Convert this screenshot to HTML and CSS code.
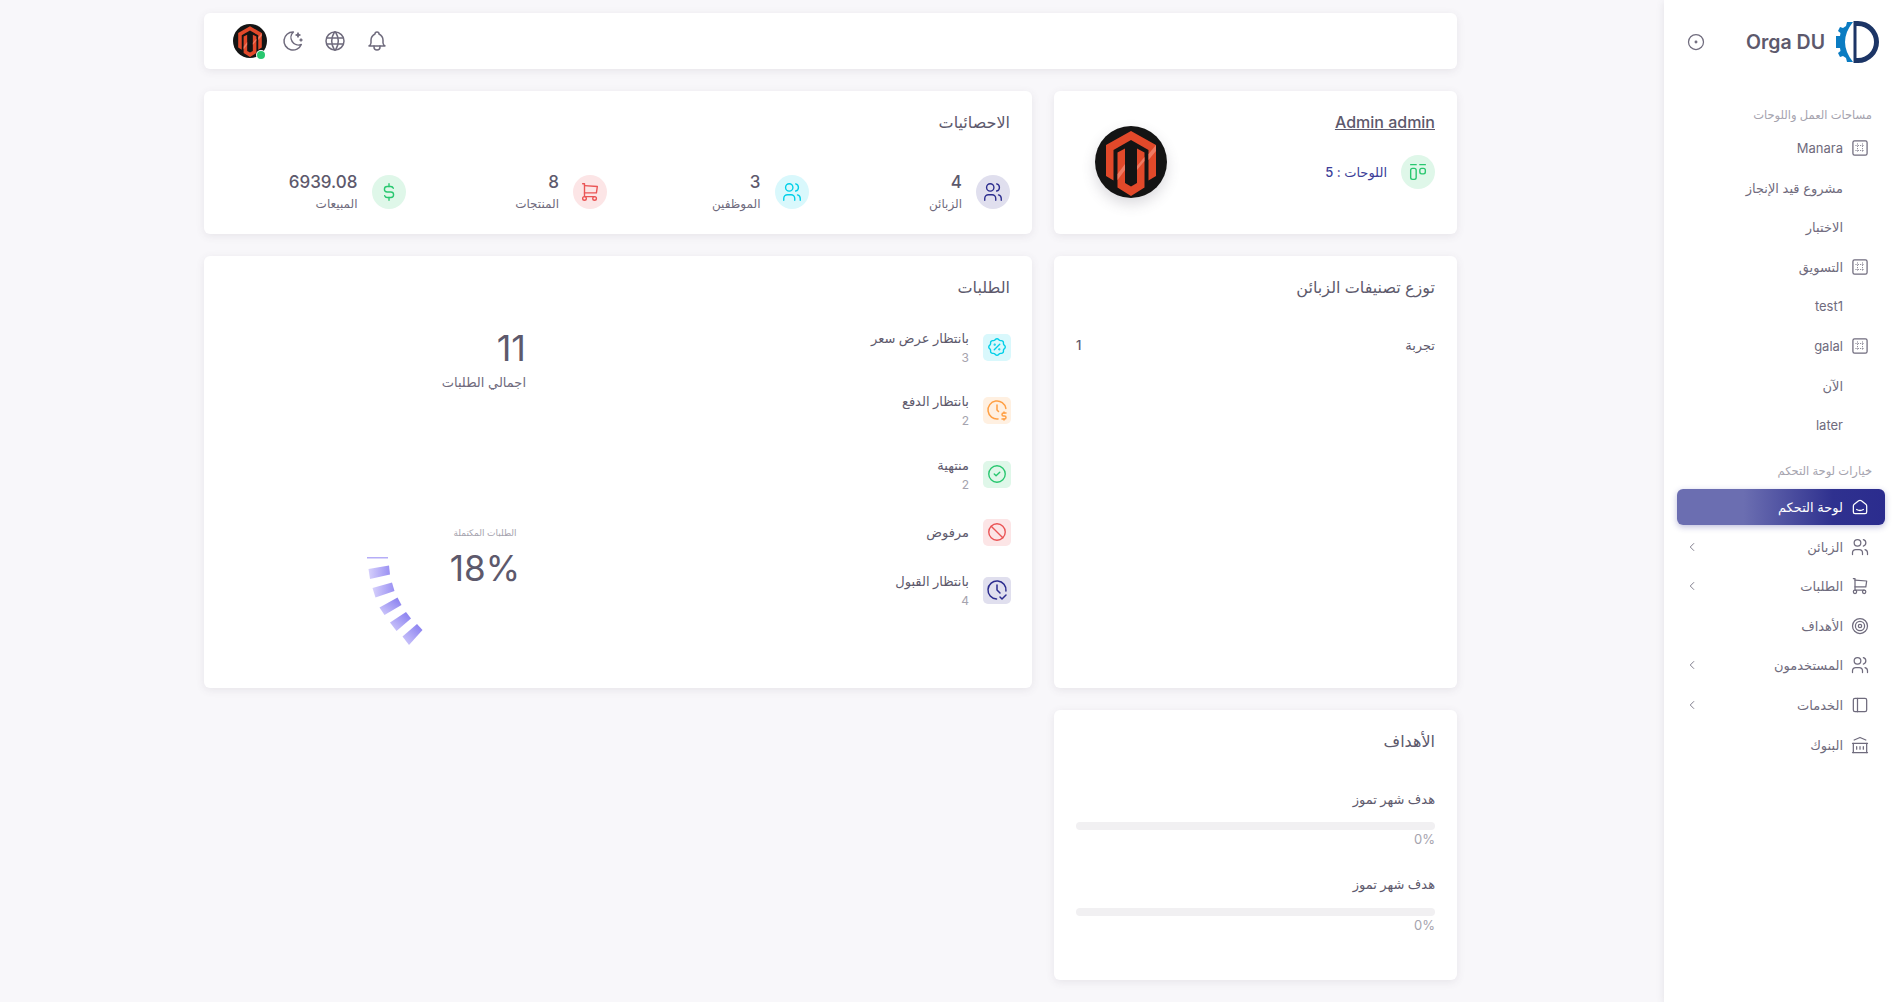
FILE: index.html
```html
<!DOCTYPE html>
<html lang="ar" dir="rtl">
<head>
<meta charset="utf-8">
<title>Orga DU</title>
<link rel="stylesheet" href="styles.css">
</head>
<body>
<svg class="sprite" xmlns="http://www.w3.org/2000/svg">
  <symbol id="i-users" viewBox="0 0 24 24"><circle cx="9" cy="7" r="4"/><path d="M3 21v-2a4 4 0 0 1 4 -4h4a4 4 0 0 1 4 4v2"/><path d="M16 3.13a4 4 0 0 1 0 7.75"/><path d="M21 21v-2a4 4 0 0 0 -3 -3.85"/></symbol>
  <symbol id="i-home" viewBox="0 0 24 24"><path d="M19 8.71l-5.333 -4.148a2.666 2.666 0 0 0 -3.274 0l-5.334 4.148a2.665 2.665 0 0 0 -1.029 2.105v7.2a2 2 0 0 0 2 2h12a2 2 0 0 0 2 -2v-7.2c0 -.823 -.38 -1.6 -1.03 -2.105"/><path d="M16 15c-2.21 1.333 -5.792 1.333 -8 0"/></symbol>
  <symbol id="i-cart" viewBox="0 0 24 24"><circle cx="6" cy="19" r="2"/><circle cx="17" cy="19" r="2"/><path d="M17 17h-11v-14h-2"/><path d="M6 5l14 1l-1 7h-13"/></symbol>
  <symbol id="i-target" viewBox="0 0 24 24"><circle cx="12" cy="12" r="2"/><circle cx="12" cy="12" r="5.5"/><circle cx="12" cy="12" r="9"/></symbol>
  <symbol id="i-sidebar" viewBox="0 0 24 24"><rect x="4" y="4" width="16" height="16" rx="2"/><path d="M9 4v16"/></symbol>
  <symbol id="i-bank" viewBox="0 0 24 24"><path d="M3 21h18"/><path d="M3 10h18"/><path d="M5 6l7 -3l7 3"/><path d="M4 10v11"/><path d="M20 10v11"/><path d="M8 14v3"/><path d="M12 14v3"/><path d="M16 14v3"/></symbol>
  <symbol id="i-chev" viewBox="0 0 24 24"><path d="M15 6l-6 6l6 6"/></symbol>
  <symbol id="i-board" viewBox="0 0 24 24"><rect x="3.500" y="3.500" width="17" height="17" rx="2"/><path class="dots" d="M9 7v10M15 7v10M7 9h10M7 15h10"/></symbol>
  <symbol id="i-dot" viewBox="0 0 24 24"><circle cx="12" cy="12" r="9"/><circle cx="12" cy="12" r="1"/></symbol>
  <symbol id="i-bell" viewBox="0 0 24 24"><path d="M10 5a2 2 0 1 1 4 0a7 7 0 0 1 4 6v3a4 4 0 0 0 2 3h-16a4 4 0 0 0 2 -3v-3a7 7 0 0 1 4 -6"/><path d="M9 17v1a3 3 0 0 0 6 0v-1"/></symbol>
  <symbol id="i-world" viewBox="0 0 24 24"><circle cx="12" cy="12" r="9"/><path d="M3.600 9h16.800"/><path d="M3.600 15h16.800"/><path d="M11.500 3a17 17 0 0 0 0 18"/><path d="M12.500 3a17 17 0 0 1 0 18"/></symbol>
  <symbol id="i-moon" viewBox="0 0 24 24"><path d="M12 3c.132 0 .263 0 .393 0a7.500 7.500 0 0 0 7.920 12.446a9 9 0 1 1 -8.313 -12.454z"/><path d="M17 4a2 2 0 0 0 2 2a2 2 0 0 0 -2 2a2 2 0 0 0 -2 -2a2 2 0 0 0 2 -2"/><path d="M19 11h2m-1 -1v2"/></symbol>
  <symbol id="i-dollar" viewBox="0 0 24 24"><path d="M16.700 8a3 3 0 0 0 -2.700 -2h-4a3 3 0 0 0 0 6h4a3 3 0 0 1 0 6h-4a3 3 0 0 1 -2.700 -2"/><path d="M12 3v3m0 12v3"/></symbol>
  <symbol id="i-kanban" viewBox="0 0 24 24"><path d="M4 4h6"/><path d="M14 4h6"/><rect x="4" y="8" width="6" height="12" rx="2"/><rect x="14" y="8" width="6" height="6" rx="2"/></symbol>
  <symbol id="i-rosette" viewBox="0 0 24 24"><path d="M9 15l6 -6"/><circle cx="9.500" cy="9.500" r=".5"/><circle cx="14.500" cy="14.500" r=".5"/><path d="M5 7.200a2.200 2.200 0 0 1 2.200 -2.200h1a2.200 2.200 0 0 0 1.550 -.64l.7 -.7a2.200 2.200 0 0 1 3.120 0l.7 .7c.412 .41 .97 .64 1.550 .64h1a2.200 2.200 0 0 1 2.200 2.200v1c0 .58 .23 1.138 .64 1.550l.7 .7a2.200 2.200 0 0 1 0 3.120l-.7 .7a2.200 2.200 0 0 0 -.64 1.550v1a2.200 2.200 0 0 1 -2.200 2.200h-1a2.200 2.200 0 0 0 -1.550 .64l-.7 .7a2.200 2.200 0 0 1 -3.120 0l-.7 -.7a2.200 2.200 0 0 0 -1.550 -.64h-1a2.200 2.200 0 0 1 -2.200 -2.200v-1a2.200 2.200 0 0 0 -.64 -1.550l-.7 -.7a2.200 2.200 0 0 1 0 -3.120l.7 -.7a2.200 2.200 0 0 0 .64 -1.550v-1"/></symbol>
  <symbol id="i-clockd" viewBox="0 0 24 24"><path d="M20.866 10.450a9 9 0 1 0 -7.815 10.488"/><path d="M12 7v5l1.500 1.500"/><path d="M21 15h-2.500a1.500 1.500 0 0 0 0 3h1a1.500 1.500 0 0 1 0 3h-2.500"/><path d="M19 21v1m0 -8v1"/></symbol>
  <symbol id="i-check" viewBox="0 0 24 24"><circle cx="12" cy="12" r="9"/><path d="M9 12l2 2l4 -4"/></symbol>
  <symbol id="i-ban" viewBox="0 0 24 24"><circle cx="12" cy="12" r="9"/><path d="M5.700 5.700l12.600 12.600"/></symbol>
  <symbol id="i-clockc" viewBox="0 0 24 24"><path d="M20.942 13.021a9 9 0 1 0 -9.407 7.967"/><path d="M12 7v5l3 3"/><path d="M15 19l2 2l4 -4"/></symbol>
  <symbol id="i-magento" viewBox="0 0 72 72"><circle class="mg-bg" cx="36" cy="36" r="36"/><path class="mg-fg" d="M36 5L61 19V50L53.500 54.500V24L36 14L18.500 24V54.500L11 50V19Z"/><path class="mg-fg" d="M22.500 26.500L30 22.500V57L36 60.500L42 57V22.500L49.500 26.500V61.500L36 70L22.500 61.500Z"/><path class="mg-gloss" d="M22.500 48L30 38V44L22.500 54ZM53.500 28L61 19V25L53.500 34ZM42 40L49.500 31V35L42 44Z"/></symbol>
</svg>

<aside class="sidebar">
  <div class="brand">
    <svg class="logo" viewBox="0 0 44 44" xmlns="http://www.w3.org/2000/svg">
      <path class="logo-gear" d="M18 2H12L11 6L8 8L5 7L3 11L5.500 13L5 16H1V28H5L5.500 31L3 33L5 37L8 36L11 38L12 42H18Q2 22 18 2Z"/>
      <path class="logo-d" fill-rule="evenodd" d="M18.500 1H23A21 21 0 0 1 23 43H18.500ZM21.500 6V38H23A16 16 0 0 0 23 6Z"/>
    </svg>
    <span class="brand-name">Orga DU</span>
    <svg class="ico brand-toggle"><use href="#i-dot"/></svg>
  </div>

  <nav class="nav">
    <div class="nav-label nav-label-first">مساحات العمل واللوحات</div>
    <a class="nav-item"><svg class="ico"><use href="#i-board"/></svg><span>Manara</span></a>
    <a class="nav-item"><span class="ico"></span><span>مشروع قيد الإنجاز</span></a>
    <a class="nav-item"><span class="ico"></span><span>الاختبار</span></a>
    <a class="nav-item"><svg class="ico"><use href="#i-board"/></svg><span>التسويق</span></a>
    <a class="nav-item"><span class="ico"></span><span>test1</span></a>
    <a class="nav-item"><svg class="ico"><use href="#i-board"/></svg><span>galal</span></a>
    <a class="nav-item"><span class="ico"></span><span>الآن</span></a>
    <a class="nav-item"><span class="ico"></span><span>later</span></a>

    <div class="nav-label nav-label-second">خيارات لوحة التحكم</div>
    <a class="nav-item active"><svg class="ico"><use href="#i-home"/></svg><span>لوحة التحكم</span></a>
    <a class="nav-item"><svg class="ico"><use href="#i-users"/></svg><span>الزبائن</span><svg class="chev"><use href="#i-chev"/></svg></a>
    <a class="nav-item"><svg class="ico"><use href="#i-cart"/></svg><span>الطلبات</span><svg class="chev"><use href="#i-chev"/></svg></a>
    <a class="nav-item"><svg class="ico"><use href="#i-target"/></svg><span>الأهداف</span></a>
    <a class="nav-item"><svg class="ico"><use href="#i-users"/></svg><span>المستخدمون</span><svg class="chev"><use href="#i-chev"/></svg></a>
    <a class="nav-item"><svg class="ico"><use href="#i-sidebar"/></svg><span>الخدمات</span><svg class="chev"><use href="#i-chev"/></svg></a>
    <a class="nav-item"><svg class="ico"><use href="#i-bank"/></svg><span>البنوك</span></a>
  </nav>
</aside>

<main class="main">
  <header class="topbar">
    <div class="top-actions">
      <svg class="ico top-ico"><use href="#i-bell"/></svg>
      <svg class="ico top-ico"><use href="#i-world"/></svg>
      <svg class="ico top-ico"><use href="#i-moon"/></svg>
      <div class="top-avatar">
        <svg class="avatar-sm"><use href="#i-magento"/></svg>
        <span class="online"></span>
      </div>
    </div>
  </header>

  <div class="dash">
    <section class="card profile">
      <div class="profile-info">
        <a class="profile-name">Admin admin</a>
        <div class="profile-boards">
          <span class="round green"><svg class="ico-18"><use href="#i-kanban"/></svg></span>
          <span class="boards-text">اللوحات : 5</span>
        </div>
      </div>
      <div class="profile-avatar"><svg class="avatar-lg"><use href="#i-magento"/></svg></div>
    </section>

    <section class="card stats">
      <h2 class="card-title">الاحصائيات</h2>
      <div class="stats-grid">
        <div class="stat"><span class="round indigo"><svg class="ico-18"><use href="#i-users"/></svg></span><div><div class="stat-num">4</div><div class="stat-label">الزبائن</div></div></div>
        <div class="stat"><span class="round cyan"><svg class="ico-18"><use href="#i-users"/></svg></span><div><div class="stat-num">3</div><div class="stat-label">الموظفين</div></div></div>
        <div class="stat"><span class="round red"><svg class="ico-18"><use href="#i-cart"/></svg></span><div><div class="stat-num">8</div><div class="stat-label">المنتجات</div></div></div>
        <div class="stat"><span class="round green"><svg class="ico-18"><use href="#i-dollar"/></svg></span><div><div class="stat-num">6939.08</div><div class="stat-label">المبيعات</div></div></div>
      </div>
    </section>

    <section class="card dist">
      <h2 class="card-title">توزع تصنيفات الزبائن</h2>
      <div class="dist-row"><span>تجربة</span><span>1</span></div>
    </section>

    <section class="card orders">
      <h2 class="card-title">الطلبات</h2>
      <div class="orders-body">
        <div class="order-list">
          <div class="order o1"><span class="tile cyan"><svg class="ico-18"><use href="#i-rosette"/></svg></span><div><div class="order-name">بانتظار عرض سعر</div><div class="order-num">3</div></div></div>
          <div class="order o2"><span class="tile orange"><svg class="ico-20"><use href="#i-clockd"/></svg></span><div><div class="order-name">بانتظار الدفع</div><div class="order-num">2</div></div></div>
          <div class="order o3"><span class="tile green"><svg class="ico-18"><use href="#i-check"/></svg></span><div><div class="order-name">منتهية</div><div class="order-num">2</div></div></div>
          <div class="order o4"><span class="tile red"><svg class="ico-18"><use href="#i-ban"/></svg></span><div><div class="order-name">مرفوض</div></div></div>
          <div class="order o5"><span class="tile indigo"><svg class="ico-20"><use href="#i-clockc"/></svg></span><div><div class="order-name">بانتظار القبول</div><div class="order-num">4</div></div></div>
        </div>
        <div class="order-summary">
          <div class="total-num">11</div>
          <div class="total-label">اجمالي الطلبات</div>
          <div class="completed">
            <div class="completed-text">
              <div class="completed-label">الطلبات المكتملة</div>
              <div class="completed-num">18%</div>
            </div>
            <svg class="gauge" viewBox="0 0 56 92" xmlns="http://www.w3.org/2000/svg">
              <defs>
                <linearGradient id="g1" x1="0" x2="1" y1="0" y2="0"><stop offset="0" stop-color="#d6d0fb"/><stop offset="1" stop-color="#9a90f3"/></linearGradient>
                <linearGradient id="g2" x1="0" x2="1" y1="1" y2="0"><stop offset="0" stop-color="#d3cdfb"/><stop offset="1" stop-color="#8379ef"/></linearGradient>
              </defs>
              <rect x="1" y="0" width="21" height="1.500" fill="#b5adf7"/>
              <path fill="url(#g1)" d="M2.500 12L23 8.500L24 17.500L4 22Z"/>
              <path fill="url(#g1)" d="M6.500 31L26 25.500L28.500 34L9.500 40.500Z"/>
              <path fill="url(#g2)" d="M13.500 50.500L31.500 40.500L35.500 48L18.500 58Z"/>
              <path fill="url(#g2)" d="M24 65.500L40 55L45 61.500L30.500 74Z"/>
              <path fill="url(#g2)" d="M36.500 79.500L51 67L56.500 73L43 88Z"/>
            </svg>
          </div>
        </div>
      </div>
    </section>

    <section class="card goals">
      <h2 class="card-title">الأهداف</h2>
      <div class="goal">
        <div class="goal-name">هدف شهر تموز</div>
        <div class="goal-bar"></div>
        <div class="goal-pct">0%</div>
      </div>
      <div class="goal">
        <div class="goal-name">هدف شهر تموز</div>
        <div class="goal-bar"></div>
        <div class="goal-pct">0%</div>
      </div>
    </section>
  </div>
</main>
</body>
</html>
```

FILE: styles.css
```css
* { box-sizing: border-box; }
html, body { height: 100%; margin: 0; }
body {
  display: flex;
  background: #f8f7fa;
  color: #5d596c;
  font-family: "Inter", "DejaVu Sans", sans-serif;
  font-size: 13px;
  overflow: hidden;
}
.sprite { display: none; }
svg { fill: none; stroke: currentColor; stroke-width: 1.5; stroke-linecap: round; stroke-linejoin: round; overflow: visible; }
.dots { stroke-dasharray: .4 2.4; stroke-width: 1; }
.mg-bg { fill: #141414; stroke: none; }
.mg-fg { fill: #e2492a; stroke: none; }
.mg-gloss { fill: #ef7a62; stroke: none; }

/* sidebar */
.sidebar {
  flex: 0 0 230px;
  height: 100%;
  background: #fff;
  box-shadow: 0 2px 8px rgba(75, 70, 92, .12);
}
.brand {
  display: flex;
  align-items: center;
  height: 84px;
  padding: 0 15px 0 22px;
}
.logo { width: 44px; height: 44px; stroke: none; flex: none; }
.logo-gear { fill: #0b7cc2; stroke: none; }
.logo-d { fill: #1c3566; stroke: none; }
.brand-name { margin-inline-start: 10px; font-size: 19.500px; font-weight: 600; color: #5d596c; }
.brand-toggle { margin-inline-start: auto; color: #6f6b7d; }
.ico { width: 20px; height: 20px; flex: none; display: block; color: #6f6b7d; }
.nav { display: flex; flex-direction: column; gap: 3.600px; padding: 21px 9px 0 13px; }
.nav-label {
  height: 24px;
  padding-inline-start: 13px;
  line-height: 14px;
  padding-top: 3px;
  font-size: 11.500px;
  color: #a5a3ae;
}
.nav-label-first { margin-bottom: -2.500px; }
.nav-label-second { margin-top: 14.500px; }
.nav-item {
  display: flex;
  align-items: center;
  gap: 7px;
  height: 36px;
  padding: 0 15px 0 8px;
  border-radius: 6px;
  font-size: 13px;
  color: #6f6b7d;
}
.nav-item.active {
  background: linear-gradient(270deg, #2b2c8e 0%, #2f318f 25%, #6b6eb1 68%, #6b6eb1 100%);
  color: #fff;
  box-shadow: 0 2px 6px rgba(43, 44, 142, .3);
}
.nav-item.active .ico { color: #fff; }
.chev { width: 14px; height: 14px; margin-inline-start: auto; color: #6f6b7d; }

/* main */
.main { flex: 1; min-width: 0; padding: 13px 207px 0 204px; }
.card, .topbar {
  background: #fff;
  border-radius: 6px;
  box-shadow: 0 2px 8px rgba(75, 70, 92, .1);
}
.topbar {
  height: 56px;
  padding: 0 22px 0 29px;
  display: flex;
  align-items: center;
  justify-content: flex-end;
}
.top-actions { display: flex; align-items: center; gap: 18px; }
.top-ico { width: 24px; height: 24px; }
.top-avatar { position: relative; width: 34px; height: 34px; margin-inline-start: -4px; }
.avatar-sm { width: 34px; height: 34px; display: block; }
.online {
  position: absolute;
  left: 24px;
  bottom: -1px;
  width: 8px;
  height: 8px;
  border-radius: 50%;
  background: #28c76f;
  box-shadow: 0 0 0 1px #fff;
}
.dash {
  display: grid;
  grid-template-columns: 403px 1fr;
  grid-template-rows: 143px 432px 270px;
  gap: 22px;
  margin-top: 22px;
}
.card { padding: 22px; }
.card-title { margin: 0; font-size: 16px; font-weight: 500; line-height: 18px; color: #5d596c; }

/* profile */
.profile { display: flex; justify-content: space-between; }
.profile-name { display: block; font-size: 16px; line-height: 18px; font-weight: 500; text-decoration: underline; color: #5d596c; }
.profile-boards { display: flex; align-items: center; gap: 14px; margin-top: 24px; }
.boards-text { font-size: 13px; font-weight: 500; color: #3b3d98; }
.profile-avatar { margin: 13px 0 0 19px; }
.avatar-lg { width: 72px; height: 72px; display: block; border-radius: 50%; box-shadow: 0 6px 14px rgba(75, 70, 92, .2); }
.round {
  width: 34px;
  height: 34px;
  border-radius: 50%;
  display: flex;
  align-items: center;
  justify-content: center;
  flex: none;
}
.ico-18 { width: 22px; height: 22px; display: block; }
.ico-20 { width: 24px; height: 24px; display: block; }
.green { background: #dff7e9; color: #28c76f; }
.indigo { background: #e0dfee; color: #2b2c8e; }
.cyan { background: #d9f8fc; color: #00cfe8; }
.red { background: #fce5e6; color: #ea5455; }
.orange { background: #fff0e1; color: #ff9f43; }

/* stats */
.stats-grid { display: grid; grid-template-columns: repeat(4, 1fr); gap: 22px; margin-top: 41px; }
.stat { display: flex; align-items: center; gap: 14px; }
.stat-num { font-size: 17px; font-weight: 500; line-height: 20px; color: #5d596c; }
.stat-label { font-size: 12px; line-height: 16px; margin-top: 4px; color: #6f6b7d; }

/* distribution */
.dist-row { display: flex; justify-content: space-between; margin-top: 41px; font-size: 13px; font-weight: 500; line-height: 16px; }

/* orders */
.orders { grid-column: 2; grid-row: 2; }
.orders-body { display: grid; grid-template-columns: 1fr 1fr; gap: 22px; }
.order { display: flex; align-items: center; gap: 14px; }
.order-list { padding-top: 33px; display: flex; flex-direction: column; }
.o1, .o2, .o3, .o5 { height: 36px; }
.o2 { margin-top: 27px; }
.o3 { margin-top: 28px; }
.o4 { height: 28px; margin-top: 26px; }
.o5 { margin-top: 26px; }
.tile {
  width: 28px;
  height: 27px;
  margin-inline-start: -1px;
  border-radius: 5px;
  display: flex;
  align-items: center;
  justify-content: center;
  flex: none;
}
.order-name { font-size: 13px; font-weight: 500; line-height: 17px; color: #5d596c; }
.order-num { font-size: 12px; line-height: 14px; margin-top: 4px; color: #a5a3ae; }
.order-summary { padding: 32px 81px 0 0; }
.total-num { font-size: 36px; line-height: 40px; font-weight: 400; color: #5d596c; }
.total-label { margin-top: 5px; font-size: 13px; line-height: 18px; color: #6f6b7d; }
.completed { display: flex; margin-top: 135.500px; margin-inline-start: -3px; }
.completed-text { text-align: center; width: 88px; }
.completed-label { font-size: 9px; line-height: 12px; color: #a5a3ae; }
.completed-num { margin-top: 8px; font-size: 35px; line-height: 42px; color: #5d596c; }
.gauge { width: 56px; height: 92px; margin: 30.500px 19px 0 0; stroke: none; flex: none; }

/* goals */
.goals { grid-column: 1; grid-row: 3; }
.goal { margin-top: 41px; }
.goal + .goal { margin-top: 28.500px; }
.goal-name { font-size: 13px; font-weight: 500; line-height: 16px; color: #5d596c; }
.goal-bar { height: 8px; border-radius: 4px; background: #f1f0f2; margin-top: 15px; }
.goal + .goal .goal-bar { margin-top: 16px; }
.goal-pct { font-size: 13px; line-height: 16px; margin-top: 1px; color: #a5a3ae; }
```
